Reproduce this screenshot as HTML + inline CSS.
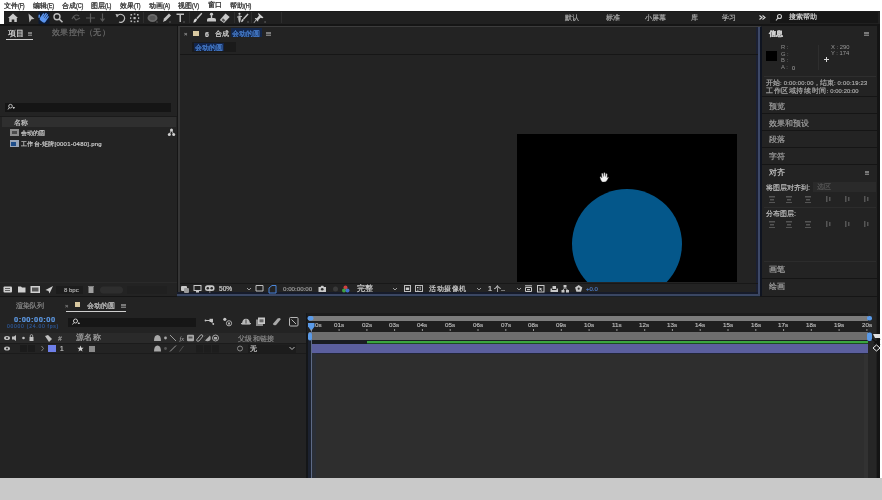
<!DOCTYPE html>
<html><head><meta charset="utf-8">
<style>
*{margin:0;padding:0;box-sizing:border-box}
html,body{width:882px;height:500px;overflow:hidden;background:#c9c9c9;font-family:"Liberation Sans",sans-serif;}
.a{position:absolute}
.t{position:absolute;white-space:nowrap;line-height:1;will-change:transform;-webkit-text-stroke:0.2px currentColor}
#menu{left:0;top:0;width:882px;height:11px;background:#fff}
#menu .t{top:1.5px;font-size:6.6px;color:#111;-webkit-text-stroke:0.25px #333}
#menu .p{display:inline-block;font-size:7px;transform:scaleX(0.78);transform-origin:0 0;letter-spacing:-0.2px}
#rstrip{left:880px;top:0;width:2px;height:478px;background:#fff}
#lstrip{left:0;top:0;width:4px;height:24px;background:#fff}
#app{left:0;top:24px;width:880px;height:454px;background:#151515}
#tool{left:4px;top:11px;width:876px;height:13px;background:#202020;border-top:1.5px solid #1a1a1a}
.panel{background:#232323}
.g{color:#9a9a9a}
svg{position:absolute;overflow:visible}
</style></head><body>
<div class="a" id="menu">
 <span class="t" style="left:4px">文件<span class="p">(F)</span></span>
 <span class="t" style="left:33px">编辑<span class="p">(E)</span></span>
 <span class="t" style="left:62px">合成<span class="p">(C)</span></span>
 <span class="t" style="left:91px">图层<span class="p">(L)</span></span>
 <span class="t" style="left:120px">效果<span class="p">(T)</span></span>
 <span class="t" style="left:149px">动画<span class="p">(A)</span></span>
 <span class="t" style="left:178px">视图<span class="p">(V)</span></span>
 <span class="t" style="left:208px">窗口</span>
 <span class="t" style="left:230px">帮助<span class="p">(H)</span></span>
</div>
<div class="a" id="lstrip"></div>
<div class="a" id="rstrip"></div>
<div class="a" id="app"></div>
<div class="a" id="tool"></div>

<!-- project panel -->
<div class="a panel" style="left:0;top:26px;width:177px;height:270px"></div>
<!-- comp panel -->
<div class="a panel" style="left:178px;top:26px;width:584px;height:270px;border-top:1px solid #3c3c3c;border-left:2px solid #363636;border-right:2px solid #0f1420;border-bottom:0"></div>
<div class="a" style="left:756px;top:27px;width:2px;height:267px;background:#1b2033"></div>
<div class="a" style="left:758px;top:27px;width:2px;height:269px;background:#3d4866"></div>
<div class="a" style="left:177px;top:291.5px;width:581px;height:2px;background:#161b2a"></div>
<div class="a" style="left:177px;top:294px;width:583px;height:1.5px;background:#3a4662"></div><div class="a" style="left:177px;top:295.5px;width:583px;height:2px;background:#182028"></div>
<div class="a" style="left:517px;top:134px;width:220px;height:148px;background:#000;overflow:hidden">
  <div class="a" style="left:55px;top:55px;width:110px;height:110px;border-radius:50%;background:#04578a"></div>
</div>

<svg style="left:0;top:0" width="882" height="300">
 <path d="M599.8 177 L601 176.5 L602 178 L601.5 173.5 Q602.3 172.8 603 173.5 L603.5 176.5 L603.8 172.8 Q604.6 172.2 605.2 172.9 L605.4 176.5 L606 173.6 Q606.8 173.2 607.3 173.9 L607 178 L607.8 176.8 Q608.6 176.8 608.6 177.6 L607 180.5 Q606 182 604 182 L602.5 182 Q601.5 181.5 600.8 180 Z" fill="#f2f2f2" stroke="#222" stroke-width="0.3"/>
</svg>
<!-- right panel -->
<div class="a panel" style="left:762px;top:26px;width:118px;height:270px"></div>
<!-- timeline -->
<div class="a panel" style="left:0;top:297px;width:880px;height:181px"></div>

<!-- toolbar icons -->
<svg style="left:0;top:0" width="882" height="30" viewBox="0 0 882 30">
 <g fill="#c8c8c8" stroke="none">
  <!-- home -->
  <path d="M13 13.5 L18 18 L16.8 18 L16.8 22 L14.3 22 L14.3 19.5 L11.7 19.5 L11.7 22 L9.2 22 L9.2 18 L8 18 Z"/>
  <!-- arrow -->
  <path d="M28.5 13.5 L34.5 19 L31.5 19.3 L29.5 22.5 Z" fill="#bdbdbd"/>
 </g>
 <!-- hand selected -->
 <rect x="38.5" y="12" width="11" height="12" fill="#0c1a33"/>
 <g transform="rotate(35 44 18)" fill="#5a94ee">
  <rect x="40.6" y="14.3" width="1.5" height="5" rx="0.7"/>
  <rect x="42.4" y="12.6" width="1.5" height="6" rx="0.7"/>
  <rect x="44.2" y="12.8" width="1.5" height="6" rx="0.7"/>
  <rect x="46" y="14" width="1.4" height="5" rx="0.7"/>
  <rect x="40.6" y="17.5" width="6.8" height="4.6" rx="2"/>
  <rect x="38.2" y="17.5" width="1.4" height="3.5" rx="0.7" transform="rotate(-30 39 19)"/>
 </g>
 <!-- zoom -->
 <circle cx="57" cy="16.8" r="3" fill="none" stroke="#bdbdbd" stroke-width="1.4"/>
 <path d="M59.2 19 L62.5 22.3" stroke="#bdbdbd" stroke-width="1.6"/>
 <!-- dim icons -->
 <g stroke="#5a5a5a" stroke-width="1.2" fill="none">
  <path d="M72 19 Q75 13 79 16 M73 16 L76 20 L80 18"/>
  <path d="M90.5 13.5 V22.5 M86 18 H95"/>
  <path d="M102.5 13.5 V20 M100.5 18.5 L102.5 21 L104.5 18.5"/>
 </g>
 <!-- rotate -->
 <path d="M117 16.5 A4 4 0 1 1 119 22" fill="none" stroke="#bdbdbd" stroke-width="1.3"/>
 <path d="M115.5 14 L118.5 14.5 L117 17.5 Z" fill="#bdbdbd"/>
 <!-- pan behind -->
 <g fill="#bdbdbd">
  <rect x="130.5" y="14" width="1.6" height="1.6"/><rect x="137" y="14" width="1.6" height="1.6"/>
  <rect x="130.5" y="20.5" width="1.6" height="1.6"/><rect x="137" y="20.5" width="1.6" height="1.6"/>
  <rect x="133.5" y="17" width="2.2" height="2.2"/>
  <rect x="133.8" y="13.5" width="1.6" height="1.2"/><rect x="133.8" y="21.2" width="1.6" height="1.2"/>
  <rect x="130" y="17.3" width="1.2" height="1.6"/><rect x="138" y="17.3" width="1.2" height="1.6"/>
 </g>
 <path d="M143.5 12 V23 M189.5 12 V23 M234.5 12 V23 M251.5 12 V23 M281.5 12 V23" stroke="#2e2e2e" stroke-width="1"/>
 <!-- ellipse -->
 <ellipse cx="152.5" cy="18" rx="5" ry="4" fill="#6a6a6a"/>
 <ellipse cx="152.5" cy="18" rx="3" ry="2.2" fill="#555"/>
 <!-- pen -->
 <path d="M163 22 L164 18.5 L169 13.5 L171 15.5 L166 20.5 Z" fill="#c0c0c0"/>
 <!-- T -->
 <path d="M176.5 13.5 H184 V15 H181 V22 H179.5 V15 H176.5 Z" fill="#c0c0c0"/>
 <!-- brush -->
 <path d="M201.3 12.8 L202.3 13.8 L197.5 19.2 L196.3 18 Z" fill="#c8c8c8"/>
 <path d="M196 18.3 L197.2 19.5 Q196.5 22 193.3 22.7 Q193.6 19.2 196 18.3 Z" fill="#d8d8d8"/>
 <!-- stamp -->
 <ellipse cx="211.5" cy="14.2" rx="1.6" ry="1.4" fill="#c8c8c8"/>
 <rect x="210.8" y="15" width="1.4" height="3" fill="#c8c8c8"/>
 <path d="M207 21.5 V19.5 Q207 18 209 18 H214 Q216 18 216 19.5 V21.5 Z" fill="#c8c8c8"/>
 <!-- eraser -->
 <path d="M219.8 20 L225.5 13.5 L229.7 17 L224 23 Z" fill="#c8c8c8"/>
 <path d="M221.5 20 L223 18.3 L225.3 20.3 L223.8 22 Z" fill="#555"/>
 <!-- roto -->
 <circle cx="239.5" cy="13.8" r="1.1" fill="#bdbdbd"/>
 <path d="M238.5 15.5 H240.5 L240.8 19 L240 22.5 H239 L238.2 19 Z M237 16.5 L242 16 L242 17 L237 17.5 Z" fill="#bdbdbd"/>
 <path d="M247.5 13.5 L248.6 14.5 L244 19.5 L243 18.5 Z" fill="#c8c8c8"/>
 <path d="M242.8 18.8 L243.8 19.8 Q243.3 21.8 241 22.3 Q241.3 19.6 242.8 18.8 Z" fill="#d0d0d0"/>
 <rect x="247.5" y="21.5" width="1" height="1" fill="#9a9a9a"/>
 <!-- puppet -->
 <path d="M258.5 13 L263.5 17.5 L262.3 18.2 L260.5 17.8 L258.3 20 L258.2 21.5 L257.3 21.3 L254.8 18.5 L255.3 18 L256.8 18.2 L259 15.8 L258.2 14 Z" fill="#d0d0d0"/>
 <path d="M256 20 L254 22.8" stroke="#c8c8c8" stroke-width="0.9"/>
 <rect x="264.5" y="21.5" width="1.2" height="1" fill="#8a8a8a"/>
 <g fill="#8a8a8a"><rect x="169.5" y="21.5" width="1" height="1"/><rect x="156.5" y="21.5" width="1" height="1"/><rect x="183.5" y="21.5" width="1" height="1"/></g>
</svg>

<!-- toolbar right -->
<div class="a" style="left:0;top:0">
 <span class="t g" style="left:565px;top:14px;font-size:7px;color:#a8a8a8">默认</span>
 <span class="t g" style="left:606px;top:14px;font-size:7px;color:#a8a8a8">标准</span>
 <span class="t g" style="left:645px;top:14px;font-size:7px;color:#a8a8a8">小屏幕</span>
 <span class="t g" style="left:691px;top:14px;font-size:7px;color:#a8a8a8">库</span>
 <span class="t g" style="left:722px;top:14px;font-size:7px;color:#a8a8a8">学习</span>
 
</div>
<div class="a" style="left:770px;top:12px;width:108px;height:11px;background:#161616"></div>
<svg style="left:0;top:0" width="882" height="30">
 <circle cx="779.5" cy="16.5" r="2" fill="none" stroke="#cfcfcf" stroke-width="1.1"/>
 <path d="M778 18 L776 20.5" stroke="#cfcfcf" stroke-width="1.2"/>
</svg>
<span class="t" style="left:789px;top:14px;font-size:6.7px;color:#d8d8d8">搜索帮助</span><svg style="left:0;top:0" width="882" height="30"><path d="M759.5 15.5 L762 17.5 L759.5 19.5 M762.5 15.5 L765 17.5 L762.5 19.5" stroke="#d8d8d8" stroke-width="1.1" fill="none"/></svg>

<!-- project panel content -->
<span class="t" style="left:8px;top:29.5px;font-size:7.6px;color:#d8d8d8">项目</span>
<div class="a" style="left:27.5px;top:32.0px;width:4.5px;height:4px;background:repeating-linear-gradient(#7a7a7a 0 1px,#4a4a4a 1px 1.5px)"></div>
<div class="a" style="left:6px;top:39px;width:27px;height:1px;background:#cfcfcf"></div>
<span class="t" style="left:52px;top:29.3px;font-size:7.6px;color:#6c6c6c;letter-spacing:0.25px">效果控件（无）</span>
<div class="a" style="left:5px;top:103px;width:166px;height:9px;background:#151515"></div>
<svg style="left:0;top:0" width="200" height="120">
 <circle cx="10.5" cy="106.2" r="1.8" fill="none" stroke="#cfcfcf" stroke-width="0.9"/>
 <path d="M9.3 107.5 L8 109.5 M13 107.5 l1.5 0 l-0.75 1 z" stroke="#cfcfcf" stroke-width="0.9" fill="#cfcfcf"/>
</svg>
<div class="a" style="left:0px;top:116px;width:177px;height:1px;background:#1a1a1a"></div><div class="a" style="left:2px;top:117px;width:174px;height:10px;background:#2f2f2f"></div>
<span class="t" style="left:14px;top:118.5px;font-size:7.2px;color:#c4c4c4">名称</span>
<div class="a" style="left:10px;top:129px;width:9px;height:7px;background:#8c8c8c"></div>
<div class="a" style="left:12px;top:131px;width:5px;height:3px;background:#4a4a4a"></div>
<span class="t" style="left:21px;top:129.5px;font-size:6.2px;color:#cccccc">会动的圆</span>
<svg style="left:0;top:0" width="200" height="160">
 <g fill="#cfcfcf"><circle cx="171.5" cy="130" r="1.5"/><circle cx="169.3" cy="134.5" r="1.5"/><circle cx="173.7" cy="134.5" r="1.5"/></g>
 <path d="M171.5 130 L169.3 134.5 M171.5 130 L173.7 134.5" stroke="#cfcfcf" stroke-width="0.8"/>
</svg>
<div class="a" style="left:10px;top:140px;width:9px;height:7px;background:#9aa6b8"></div>
<div class="a" style="left:11px;top:142px;width:5px;height:4px;background:#1e4d8a"></div>
<span class="t" style="left:21px;top:140.5px;font-size:6px;color:#cccccc;letter-spacing:0.25px">工作台-矩牌[0001-0480].png</span>

<!-- project bottom bar -->
<div class="a" style="left:0;top:281.5px;width:177px;height:1px;background:#2a2a2a"></div>
<svg style="left:0;top:0" width="180" height="300">
 <g fill="#d0d0d0">
  <rect x="3.5" y="286.5" width="8.5" height="6" rx="1"/>
  <path d="M18 286.5 H21 L22 287.5 H25.5 V292.5 H18 Z"/>
  <rect x="30.5" y="286" width="9.5" height="7"/>
  <path d="M45.5 290 L53 286 L49.5 293.5 L48.5 291 Z"/>
  <path d="M88.5 287 H93.5 V293 H88.5 Z M88 286 H94 V286.8 H88 Z" fill="#a0a0a0"/>
 </g>
 <rect x="5" y="288" width="5" height="0.8" fill="#444"/><rect x="5" y="290" width="5" height="0.8" fill="#444"/>
 <rect x="32" y="287.5" width="6.5" height="4" fill="#555"/>
 <rect x="56" y="286" width="27" height="8" fill="#1c1c1c"/>
 <rect x="100" y="286.5" width="23" height="7" rx="3.5" fill="#2e2e2e"/>
 <rect x="127" y="286" width="40" height="8" fill="#202020"/>
</svg>
<span class="t" style="left:64px;top:287.3px;font-size:6px;color:#a8a8a8">8 bpc</span>

<!-- comp panel header -->
<span class="t" style="left:184px;top:31px;font-size:6px;color:#888">×</span>
<div class="a" style="left:193px;top:31px;width:6px;height:5px;background:#d8c8a0"></div>
<span class="t" style="left:205px;top:30.5px;font-size:7px;color:#cfcfcf;font-weight:bold">6</span>
<span class="t" style="left:215px;top:30px;font-size:7px;color:#d8d8d8">合成</span>
<div class="a" style="left:231px;top:28px;width:31px;height:9px;background:#13264a"></div>
<span class="t" style="left:232px;top:30px;font-size:7px;color:#4c86d8">会动的圆</span>
<div class="a" style="left:266.0px;top:32.0px;width:4.5px;height:4px;background:repeating-linear-gradient(#7a7a7a 0 1px,#4a4a4a 1px 1.5px)"></div>
<div class="a" style="left:192px;top:42px;width:44px;height:10px;background:#1a1a1a"></div>
<div class="a" style="left:194px;top:43px;width:30px;height:8px;background:#12244a"></div>
<span class="t" style="left:195px;top:44px;font-size:7px;color:#4c86d8">会动的圆</span>
<div class="a" style="left:180px;top:54px;width:578px;height:1px;background:#161616"></div>

<!-- comp toolbar -->
<div class="a" style="left:180px;top:283px;width:578px;height:1px;background:#181818"></div>
<svg style="left:0;top:0" width="882" height="300">
 <g fill="#c8c8c8">
  <rect x="181" y="286" width="6" height="5" rx="1"/><rect x="184" y="288" width="5" height="5" rx="1" fill="#9a9a9a"/>
  <rect x="194" y="285.5" width="7" height="5" fill="none" stroke="#c8c8c8" stroke-width="1"/><rect x="196" y="291" width="3" height="1.5"/>
  <rect x="205" y="285.3" width="9.5" height="5.8" rx="2.5"/><circle cx="207.8" cy="288.2" r="1.3" fill="#2a2a2a"/><circle cx="211.7" cy="288.2" r="1.3" fill="#2a2a2a"/><rect x="209" y="291.5" width="1.5" height="1" fill="#9a9a9a"/>
  <path d="M256 285.5 H263 V291 H256 Z" fill="none" stroke="#bdbdbd" stroke-width="1"/>
  <path d="M269 293 V288 L272 285.5 H276 V293 Z" fill="none" stroke="#4c86d8" stroke-width="1"/>
  <path d="M318.5 287 H320.5 L321.3 285.8 H323.2 L324 287 H326 V292 H318.5 Z"/><circle cx="322.2" cy="289.3" r="1.3" fill="#2a2a2a"/>
  <rect x="404.5" y="285.5" width="6" height="6" fill="none" stroke="#bdbdbd" stroke-width="1"/>
  <rect x="405.8" y="287.5" width="3.4" height="2.5"/>
  <rect x="415.5" y="285.5" width="7" height="6" fill="none" stroke="#bdbdbd" stroke-width="1"/><rect x="417" y="287" width="1.5" height="1.2"/><rect x="419.5" y="288.5" width="1.5" height="1.2"/><rect x="417" y="289.7" width="1.5" height="0.8"/><rect x="419.5" y="286.8" width="1.5" height="0.8"/>
  <path d="M525 285.8 H532 M525.5 287.5 H531.5 V291.5 H525.5 Z" fill="none" stroke="#c8c8c8" stroke-width="1"/><rect x="527" y="289" width="3" height="1.2" fill="#c8c8c8"/>
  <rect x="537.5" y="285.5" width="6.5" height="6.5" fill="none" stroke="#c8c8c8" stroke-width="1"/><path d="M539.5 287.5 L542.5 289 L541 289.5 L542 291 L541.3 291.3 L540.4 289.8 L539.5 290.8 Z" fill="#c8c8c8"/>
  <path d="M550.5 292 V288.5 H552 V290 H556.5 V288.5 H558 V292 Z"/><rect x="552.5" y="286" width="3.5" height="3" fill="#c8c8c8"/>
  <rect x="563.5" y="285" width="3" height="2.5"/><rect x="561.5" y="290" width="3" height="2.5"/><rect x="566" y="290" width="3" height="2.5"/><path d="M565 287.5 L563 290 M565 287.5 L567.5 290" stroke="#c8c8c8" stroke-width="0.9"/>
  <path d="M578.7 285 L582.3 287.5 L581 291.8 H576.4 L575.1 287.5 Z"/><circle cx="578.7" cy="288.7" r="1.1" fill="#333"/>
 </g>
 <circle cx="335.5" cy="289" r="2.5" fill="#3a3a3a"/>
 <circle cx="345.5" cy="287.5" r="2" fill="#d04040"/><circle cx="344" cy="290.5" r="2" fill="#40a040"/><circle cx="347.5" cy="290.5" r="2" fill="#4070d0"/>
 <g stroke="#aaa" stroke-width="0.9" fill="none">
  <path d="M247 288 l2 2 l2 -2 M393 288 l2 2 l2 -2 M477 288 l2 2 l2 -2 M517 288 l2 2 l2 -2"/>
 </g>
</svg>
<span class="t" style="left:219px;top:285.8px;font-size:6.6px;color:#cccccc">50%</span>
<span class="t" style="left:283px;top:286.3px;font-size:6.2px;color:#9a9a9a">0:00:00:00</span>
<span class="t" style="left:357px;top:285.3px;font-size:7.5px;color:#d4d4d4">完整</span>
<span class="t" style="left:429px;top:285.3px;font-size:7.3px;color:#cfcfcf;letter-spacing:0.6px">活动摄像机</span>
<span class="t" style="left:488px;top:285.3px;font-size:7.3px;color:#cfcfcf">1 个..</span>
<span class="t" style="left:586px;top:286.3px;font-size:6px;color:#4a78c0">+0.0</span>

<!-- info panel -->
<span class="t" style="left:769px;top:30px;font-size:7px;color:#d0d0d0;font-weight:bold">信息</span>
<div class="a" style="left:864.0px;top:32.0px;width:4.5px;height:4px;background:repeating-linear-gradient(#7a7a7a 0 1px,#4a4a4a 1px 1.5px)"></div>
<div class="a" style="left:766px;top:51px;width:11px;height:10px;background:#000"></div>
<div style="position:absolute;left:781px;top:44px;font-size:5.8px;color:#8e8e8e;line-height:6.5px;will-change:transform">R :<br>G :<br>B :<br>A :</div>
<span class="t" style="left:792px;top:65.5px;font-size:5.5px;color:#8a8a8a">0</span>
<div class="a" style="left:818px;top:45px;width:1px;height:25px;background:#2e2e2e"></div>
<div style="position:absolute;left:830.5px;top:44.3px;font-size:5.8px;color:#9a9a9a;line-height:6px;will-change:transform">X : 290<br>Y : 174</div>
<div class="a" style="left:823.5px;top:59px;width:5px;height:1px;background:#d8d8d8"></div><div class="a" style="left:825.5px;top:57px;width:1px;height:5px;background:#d8d8d8"></div>
<div class="a" style="left:764px;top:76px;width:112px;height:1px;background:#2e2e2e"></div>
<span class="t" style="left:766px;top:79px;font-size:7.2px;color:#a8a8a8">开始<span style="font-size:5.8px;letter-spacing:0.25px">: 0:00:00:00，</span>结束<span style="font-size:5.8px;letter-spacing:0.25px">: 0:00:19:23</span></span>
<span class="t" style="left:766px;top:86.5px;font-size:7.2px;color:#a8a8a8;letter-spacing:0.6px">工作区域持续时间<span style="font-size:5.8px;letter-spacing:0.1px">: 0:00:20:00</span></span>
<div class="a" style="left:762px;top:96px;width:118px;height:1px;background:#151515"></div>
<span class="t" style="left:769px;top:103.3px;font-size:7.6px;color:#a0a0a0">预览</span>
<div class="a" style="left:762px;top:113px;width:118px;height:1px;background:#151515"></div>
<span class="t" style="left:769px;top:119.8px;font-size:7.6px;color:#a0a0a0">效果和预设</span>
<div class="a" style="left:762px;top:130px;width:118px;height:1px;background:#151515"></div>
<span class="t" style="left:769px;top:136.3px;font-size:7.6px;color:#a0a0a0">段落</span>
<div class="a" style="left:762px;top:147px;width:118px;height:1px;background:#151515"></div>
<span class="t" style="left:769px;top:152.8px;font-size:7.6px;color:#a0a0a0">字符</span>
<div class="a" style="left:762px;top:164px;width:118px;height:1px;background:#151515"></div>
<span class="t" style="left:769px;top:169.3px;font-size:7.6px;color:#c8c8c8">对齐</span>
<div class="a" style="left:864.5px;top:170.5px;width:4.5px;height:4px;background:repeating-linear-gradient(#7a7a7a 0 1px,#4a4a4a 1px 1.5px)"></div>
<span class="t" style="left:766px;top:183.5px;font-size:7.3px;color:#bdbdbd">将图层对齐到:</span>
<div class="a" style="left:813px;top:182px;width:63px;height:10px;background:#2a2a2a"></div>
<span class="t" style="left:817px;top:184px;font-size:6.5px;color:#555">选区</span>
<div class="a" style="left:764px;top:207px;width:112px;height:1px;background:#2c2c2c"></div>
<span class="t" style="left:766px;top:209.5px;font-size:7.3px;color:#bdbdbd">分布图层:</span>
<svg style="left:0;top:0" width="882" height="300">
 <g fill="#555">
  <rect x="769" y="196" width="6" height="1.5"/><rect x="770" y="199" width="4" height="1.5"/><rect x="769" y="202" width="6" height="1"/>
  <rect x="786" y="196" width="6" height="1.5"/><rect x="787" y="199" width="4" height="1.5"/><rect x="786" y="202" width="6" height="1"/>
  <rect x="805" y="196" width="6" height="1.5"/><rect x="806" y="199" width="4" height="1.5"/><rect x="805" y="202" width="6" height="1"/>
  <rect x="826" y="196" width="1.5" height="6"/><rect x="829" y="197" width="1.5" height="4"/>
  <rect x="845" y="196" width="1.5" height="6"/><rect x="848" y="197" width="1.5" height="4"/>
  <rect x="864" y="196" width="1.5" height="6"/><rect x="867" y="197" width="1.5" height="4"/>
  <rect x="769" y="221" width="6" height="1.5"/><rect x="770" y="224" width="4" height="1.5"/><rect x="769" y="227" width="6" height="1"/>
  <rect x="786" y="221" width="6" height="1.5"/><rect x="787" y="224" width="4" height="1.5"/><rect x="786" y="227" width="6" height="1"/>
  <rect x="805" y="221" width="6" height="1.5"/><rect x="806" y="224" width="4" height="1.5"/><rect x="805" y="227" width="6" height="1"/>
  <rect x="826" y="221" width="1.5" height="6"/><rect x="829" y="222" width="1.5" height="4"/>
  <rect x="845" y="221" width="1.5" height="6"/><rect x="848" y="222" width="1.5" height="4"/>
  <rect x="864" y="221" width="1.5" height="6"/><rect x="867" y="222" width="1.5" height="4"/>
 </g>
</svg>
<div class="a" style="left:764px;top:261px;width:112px;height:1px;background:#2c2c2c"></div>
<span class="t" style="left:769px;top:266px;font-size:7.6px;color:#a0a0a0">画笔</span>
<div class="a" style="left:762px;top:278px;width:118px;height:1px;background:#151515"></div>
<span class="t" style="left:769px;top:283px;font-size:7.6px;color:#a0a0a0">绘画</span>

<!-- timeline left -->
<span class="t" style="left:16px;top:301.5px;font-size:7px;color:#8a8a8a">渲染队列</span>
<span class="t" style="left:65px;top:303px;font-size:6px;color:#777">×</span>
<div class="a" style="left:75px;top:302px;width:5px;height:5px;background:#d8c8a0"></div>
<span class="t" style="left:87px;top:301.5px;font-size:7px;color:#c8c8c8">会动的圆</span>
<div class="a" style="left:121.0px;top:303.5px;width:4.5px;height:4px;background:repeating-linear-gradient(#7a7a7a 0 1px,#4a4a4a 1px 1.5px)"></div>
<div class="a" style="left:66px;top:311px;width:60px;height:1px;background:#cfcfcf"></div>
<span class="t" style="left:14px;top:316px;font-size:7.5px;color:#5e9ae6;font-weight:bold;letter-spacing:0.5px">0:00:00:00</span>
<span class="t" style="left:7px;top:323.5px;font-size:5px;color:#2d5590;letter-spacing:0.75px">00000 (24.00 fps)</span>
<div class="a" style="left:68px;top:318px;width:128px;height:9px;background:#161616"></div>
<svg style="left:0;top:0" width="310" height="360">
 <circle cx="75.5" cy="321" r="2" fill="none" stroke="#cfcfcf" stroke-width="1"/>
 <path d="M74 322.5 L72.5 324.5 M78 323 l1.5 0 l-0.75 1 z" stroke="#cfcfcf" stroke-width="0.9" fill="#cfcfcf"/>
 <g fill="#b0b0b0">
  <path d="M205 320.5 H210 M210 320.5 L213 323.5" stroke="#c0c0c0" stroke-width="1" fill="none"/>
  <rect x="209.5" y="318.8" width="3.5" height="3.2" fill="#c0c0c0"/><circle cx="205.5" cy="320.5" r="0.9" fill="#c0c0c0"/><circle cx="213.3" cy="324" r="0.9" fill="#c0c0c0"/>
  <circle cx="224.8" cy="319.3" r="1.6" fill="#c8c8c8"/><circle cx="229" cy="323.3" r="2.6" fill="none" stroke="#b0b0b0" stroke-width="1"/><rect x="228" y="322.5" width="2" height="2" fill="#b0b0b0"/>
  <path d="M242 324.5 Q242 318.8 246 318.8 Q250 318.8 250 324.5 Z" fill="#b8b8b8"/><rect x="241" y="323" width="10" height="1.2" fill="#b8b8b8"/><rect x="245.5" y="319.5" width="1" height="4" fill="#444"/>
  <rect x="256" y="319.5" width="7" height="6.5" fill="#8a8a8a"/><rect x="258" y="317.5" width="7" height="6.5" fill="#c8c8c8"/><rect x="259.5" y="319.3" width="4" height="3" fill="#666"/>
  <path d="M272.8 324 L277.5 318.5 Q279.8 317 280.8 319.3 L276.3 324.8 Q274 326.2 272.8 324 Z" fill="#a8a8a8"/>
  <rect x="289.5" y="317.5" width="8.5" height="8.5" rx="1" fill="none" stroke="#b8b8b8" stroke-width="1"/><path d="M291.5 319.5 L296 324" stroke="#b8b8b8" stroke-width="1"/>
 </g>
</svg>
<div class="a" style="left:0;top:333px;width:307px;height:10px;background:#2a2a2a"></div>
<div class="a" style="left:0;top:343px;width:307px;height:1px;background:#1b1b1b"></div>
<div class="a" style="left:0;top:353px;width:307px;height:1px;background:#1b1b1b"></div>
<svg style="left:0;top:0" width="310" height="360">
 <g fill="#c0c0c0">
  <ellipse cx="7" cy="338" rx="3" ry="2"/><ellipse cx="7" cy="348.5" rx="3" ry="2"/>
  <path d="M12 336.5 H14 L16 335 V341 L14 339.5 H12 Z"/>
  <circle cx="23.5" cy="338" r="1.3"/>
  <rect x="29.5" y="337" width="4" height="4"/><path d="M30.3 337 V335.8 A1.2 1.2 0 0 1 32.7 335.8 V337" fill="none" stroke="#c0c0c0" stroke-width="0.8"/>
  <path d="M45 336 L48 335 L52 339 L49 342 Z"/>
  <circle cx="60" cy="339" r="1" fill="#777"/>
 </g>
 <ellipse cx="7" cy="338" rx="1" ry="1" fill="#2a2a2a"/><ellipse cx="7" cy="348.5" rx="1" ry="1" fill="#232323"/>
 <rect x="20" y="345" width="7" height="7" fill="#1b1b1b"/><rect x="28" y="345" width="7" height="7" fill="#1b1b1b"/>
 <path d="M41.5 346 L43.5 348.5 L41.5 351" stroke="#8a8a8a" stroke-width="0.9" fill="none"/>
 <rect x="48" y="345" width="8" height="7" fill="#6e7fe8"/>
 <path d="M80.5 345.5 L81.4 347.7 L83.6 347.8 L81.9 349.2 L82.5 351.5 L80.5 350.2 L78.5 351.5 L79.1 349.2 L77.4 347.8 L79.6 347.7 Z" fill="#d0d0d0"/>
 <rect x="89" y="346" width="6" height="6" fill="#8a8a8a"/>
 <g fill="#a8a8a8">
  <path d="M154 341 Q154 335 157.5 335 Q161 335 161 341 Z M154 351.5 Q154 345.5 157.5 345.5 Q161 345.5 161 351.5 Z"/>
  <circle cx="165.5" cy="338" r="1.4"/><circle cx="165.5" cy="348.5" r="1.4" fill="#555"/>
 </g>
 <path d="M170 335 L176 341 M170 351.5 L176 345.5" stroke="#a8a8a8" stroke-width="0.9"/>
 <g fill="#a8a8a8">
  <rect x="187" y="334.8" width="7" height="6.5" rx="1"/>
  <path d="M196.5 340 L200.5 335 Q202.5 334 203 336 L199 341 Q197 342 196.5 340 Z" fill="none" stroke="#a8a8a8" stroke-width="1"/>
  <circle cx="207.5" cy="338" r="3.2"/>
  <circle cx="215.5" cy="338" r="3" fill="none" stroke="#a8a8a8" stroke-width="1"/>
  <rect x="214" y="337" width="3" height="2.5"/>
 </g>
 <rect x="188.5" y="336.5" width="4" height="2" fill="#555"/>
 <path d="M205 340.5 L210 335.5 A3.2 3.2 0 0 0 205 340.5 Z" fill="#2a2a2a"/>
 <text x="179.5" y="341" font-size="6.5" fill="#a8a8a8" font-style="italic" font-family="Liberation Serif">fx</text>
 <path d="M179.5 351.5 L183.5 346" stroke="#555" stroke-width="0.9"/>
 <rect x="196" y="345" width="7" height="7.5" fill="#1d1d1d"/><rect x="204" y="345" width="7" height="7.5" fill="#1d1d1d"/><rect x="212" y="345" width="7" height="7.5" fill="#1d1d1d"/>
 <circle cx="240" cy="348.5" r="2.5" fill="none" stroke="#8a8a8a" stroke-width="1"/>
 <rect x="248" y="344.5" width="48" height="8.5" fill="#1c1c1c"/>
 <path d="M289.5 347 l2.5 2.5 l2.5 -2.5" stroke="#bbb" stroke-width="1" fill="none"/>
</svg>
<span class="t" style="left:58px;top:334.5px;font-size:7px;color:#8a8a8a">#</span>
<span class="t" style="left:76px;top:334.3px;font-size:7.8px;color:#a8a8a8;letter-spacing:0.3px">源名称</span>
<span class="t" style="left:60px;top:345.5px;font-size:6.5px;color:#c0c0c0">1</span>
<span class="t" style="left:238px;top:334.5px;font-size:7px;color:#8a8a8a;letter-spacing:0.3px">父级和链接</span>
<span class="t" style="left:250px;top:345px;font-size:7px;color:#d0d0d0">无</span>

<!-- timeline right -->
<div class="a" style="left:307px;top:313px;width:561px;height:165px;background:#2e2e2e"></div>
<div class="a" style="left:868px;top:313px;width:9px;height:165px;background:#262626"></div><div class="a" style="left:864px;top:354px;width:4px;height:124px;background:#323232"></div><div class="a" style="left:876px;top:313px;width:1px;height:165px;background:#1f1f1f"></div>
<div class="a" style="left:877px;top:24px;width:3px;height:454px;background:#141414"></div>
<div class="a" style="left:306px;top:313px;width:1.5px;height:165px;background:#141618"></div>
<div class="a" style="left:307px;top:313px;width:561px;height:3px;background:#1c1c1c"></div>
<div class="a" style="left:309px;top:316px;width:559px;height:4.5px;background:#7c7c7c"></div>
<div class="a" style="left:307px;top:320.5px;width:561px;height:11.5px;background:#1f1f1f"></div>
<div class="a" style="left:309px;top:332px;width:559px;height:8px;background:#6e6e6e"></div>
<div class="a" style="left:309px;top:340px;width:559px;height:4px;background:#1a1d22"></div>
<div class="a" style="left:367px;top:340.5px;width:501px;height:3.5px;background:#1d4a22"></div><div class="a" style="left:367px;top:341px;width:501px;height:2.3px;background:#3aa640"></div>
<div class="a" style="left:311px;top:344px;width:557px;height:9px;background:#5b5f9e"></div>
<div class="a" style="left:311px;top:353px;width:557px;height:1px;background:#22263a"></div>
<div class="a" style="left:307.5px;top:340px;width:3.5px;height:138px;background:#1c2230"></div>
<div class="a" style="left:312px;top:353px;width:3.5px;height:125px;background:#2a2e36"></div>
<div class="a" style="left:311px;top:330px;width:1px;height:148px;background:#5d6a86"></div>
<svg style="left:0;top:0" width="882" height="360">
 <rect x="307.5" y="316" width="6" height="4.5" rx="2" fill="#5a9ae8"/>
 <path d="M308 323 H314.5 V326.5 L311.3 331 L308 326.5 Z" fill="#5a9ae8"/>
 <rect x="308" y="332.5" width="4" height="8" rx="2" fill="#5a9ae8"/>
 <rect x="867" y="316" width="5" height="4.5" rx="2" fill="#5a9ae8"/>
 <rect x="867" y="332.5" width="5" height="8.5" rx="2" fill="#5a9ae8"/>
 <path d="M873 334 H880 V338 H875 Z" fill="#e0e0e0"/>
 <path d="M872 339 L880 345 M874 344 L880 339" stroke="#111" stroke-width="1.3"/>
 <path d="M873 348 L876.5 345 L880 348 L876.5 351 Z" fill="#1a1a1a" stroke="#eee" stroke-width="1"/>
</svg>
<span class="t" style="left:314.5px;top:321.8px;font-size:6.2px;color:#b8b8b8">0s</span>
<span class="t" style="left:333.8px;top:321.8px;font-size:6.2px;color:#b8b8b8">01s</span>
<span class="t" style="left:361.6px;top:321.8px;font-size:6.2px;color:#b8b8b8">02s</span>
<span class="t" style="left:389.3px;top:321.8px;font-size:6.2px;color:#b8b8b8">03s</span>
<span class="t" style="left:417.1px;top:321.8px;font-size:6.2px;color:#b8b8b8">04s</span>
<span class="t" style="left:444.9px;top:321.8px;font-size:6.2px;color:#b8b8b8">05s</span>
<span class="t" style="left:472.7px;top:321.8px;font-size:6.2px;color:#b8b8b8">06s</span>
<span class="t" style="left:500.5px;top:321.8px;font-size:6.2px;color:#b8b8b8">07s</span>
<span class="t" style="left:528.2px;top:321.8px;font-size:6.2px;color:#b8b8b8">08s</span>
<span class="t" style="left:556.0px;top:321.8px;font-size:6.2px;color:#b8b8b8">09s</span>
<span class="t" style="left:583.8px;top:321.8px;font-size:6.2px;color:#b8b8b8">10s</span>
<span class="t" style="left:611.6px;top:321.8px;font-size:6.2px;color:#b8b8b8">11s</span>
<span class="t" style="left:639.4px;top:321.8px;font-size:6.2px;color:#b8b8b8">12s</span>
<span class="t" style="left:667.1px;top:321.8px;font-size:6.2px;color:#b8b8b8">13s</span>
<span class="t" style="left:694.9px;top:321.8px;font-size:6.2px;color:#b8b8b8">14s</span>
<span class="t" style="left:722.7px;top:321.8px;font-size:6.2px;color:#b8b8b8">15s</span>
<span class="t" style="left:750.5px;top:321.8px;font-size:6.2px;color:#b8b8b8">16s</span>
<span class="t" style="left:778.3px;top:321.8px;font-size:6.2px;color:#b8b8b8">17s</span>
<span class="t" style="left:806.0px;top:321.8px;font-size:6.2px;color:#b8b8b8">18s</span>
<span class="t" style="left:833.8px;top:321.8px;font-size:6.2px;color:#b8b8b8">19s</span>
<span class="t" style="left:861.6px;top:321.8px;font-size:6.2px;color:#b8b8b8">20s</span>
<svg style="left:0;top:0" width="882" height="360"><rect x="310.8" y="329" width="1" height="2" fill="#999"/><rect x="338.6" y="329" width="1" height="2" fill="#999"/><rect x="366.4" y="329" width="1" height="2" fill="#999"/><rect x="394.1" y="329" width="1" height="2" fill="#999"/><rect x="421.9" y="329" width="1" height="2" fill="#999"/><rect x="449.7" y="329" width="1" height="2" fill="#999"/><rect x="477.5" y="329" width="1" height="2" fill="#999"/><rect x="505.3" y="329" width="1" height="2" fill="#999"/><rect x="533.0" y="329" width="1" height="2" fill="#999"/><rect x="560.8" y="329" width="1" height="2" fill="#999"/><rect x="588.6" y="329" width="1" height="2" fill="#999"/><rect x="616.4" y="329" width="1" height="2" fill="#999"/><rect x="644.2" y="329" width="1" height="2" fill="#999"/><rect x="671.9" y="329" width="1" height="2" fill="#999"/><rect x="699.7" y="329" width="1" height="2" fill="#999"/><rect x="727.5" y="329" width="1" height="2" fill="#999"/><rect x="755.3" y="329" width="1" height="2" fill="#999"/><rect x="783.1" y="329" width="1" height="2" fill="#999"/><rect x="810.8" y="329" width="1" height="2" fill="#999"/><rect x="838.6" y="329" width="1" height="2" fill="#999"/><rect x="866.4" y="329" width="1" height="2" fill="#999"/></svg></body></html>
